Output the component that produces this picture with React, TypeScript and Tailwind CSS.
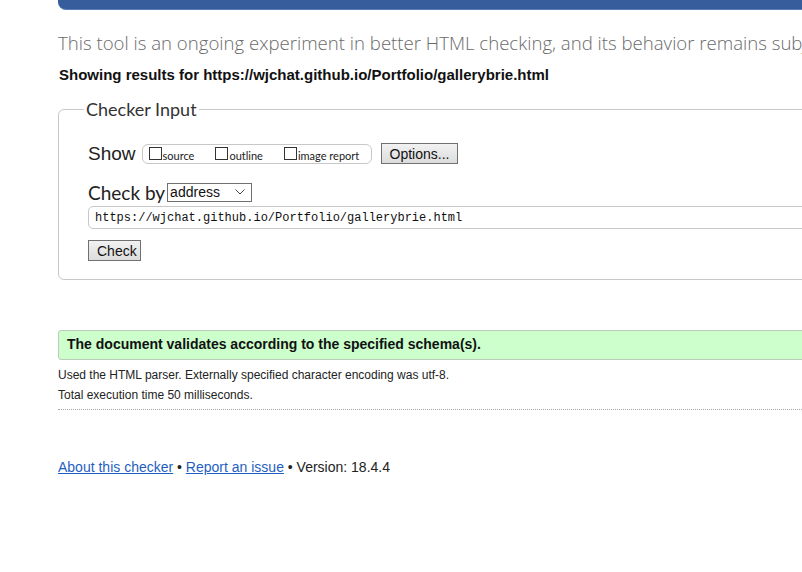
import React from "react";

const segoe = "font-['Lato','Open_Sans',sans-serif]";
const arial = "font-['Liberation_Sans',Arial,sans-serif]";

function Checkbox({ label }: { label: string }) {
  return (
    <label className="flex items-center gap-[1px] mr-[21px] last:mr-0">
      <span className="w-[13px] h-[13px] border border-[#333] bg-white" />
      <span className={`${segoe} text-[11px] text-[#222] leading-none mt-[3px]`}>{label}</span>
    </label>
  );
}

function GrayButton({ children, className = "" }: { children: React.ReactNode; className?: string }) {
  return (
    <button
      className={`${arial} border border-[#707070] bg-gradient-to-b from-[#f2f2f2] to-[#dcdcdc] text-[#111] text-[14px] leading-none px-[8px] ${className}`}
    >
      {children}
    </button>
  );
}

export default function App() {
  return (
    <div className="w-[802px] h-[572px] overflow-hidden bg-white">
      <div className="pl-[58px] w-[1000px]">
        <div className="h-[10px] bg-[#375d9c] rounded-bl-[8px] border-b border-[#5b7db5]" />

        <p className="font-['Open_Sans',sans-serif] mt-[22px] text-[18.6px] font-light text-[#6a6a6a] whitespace-nowrap leading-[22px]">
          This tool is an ongoing experiment in better HTML checking, and its behavior remains subject to change
        </p>
        <p className={`${arial} mt-[12px] ml-[1px] text-[15px] font-bold text-[#111] leading-[18px]`}>
          Showing results for https://wjchat.github.io/Portfolio/gallerybrie.html
        </p>

        <fieldset className="mt-[14px] border border-[#c8c8c8] rounded-[6px] pl-[29px] pr-4 pb-[17px] pt-0 w-[900px]">
          <legend className={`${segoe} text-[18px] text-[#333] px-[2px] ml-[-4px] leading-[22px]`}>
            Checker Input
          </legend>

          <div className="flex items-center mt-[23px]">
            <span className={`${arial} text-[19px] text-[#222] mr-[6px] leading-none`}>Show</span>
            <div className="flex items-center h-[20px] w-[230px] border border-[#c8c8c8] rounded-[6px] pl-[6px] mr-[9px]">
              <Checkbox label="source" />
              <Checkbox label="outline" />
              <Checkbox label="image report" />
            </div>
            <GrayButton className="h-[21px] w-[77px]">Options...</GrayButton>
          </div>

          <div className="flex items-center mt-[19px]">
            <span className={`${segoe} text-[19px] text-[#222] mr-[2px] leading-none`}>Check by</span>
            <div className={`${arial} relative flex items-center w-[85px] h-[19px] border border-[#707070] bg-white text-[14px] text-[#111] pl-[2px]`}>
              address
              <svg className="absolute right-[6px] top-[5px]" width="10" height="6" viewBox="0 0 10 6" fill="none">
                <path d="M0.5 0.5L5 5L9.5 0.5" stroke="#444" strokeWidth="1" />
              </svg>
            </div>
          </div>

          <div className="mt-[4px] h-[23px] border border-[#c8c8c8] rounded-[5px] flex items-center pl-[6px]">
            <span className="font-['Liberation_Mono',monospace] text-[12px] text-[#111]">
              https://wjchat.github.io/Portfolio/gallerybrie.html
            </span>
          </div>

          <GrayButton className="mt-[11px] h-[21px] w-[53px]">Check</GrayButton>
        </fieldset>

        <div className="mt-[50px] h-[30px] w-[900px] bg-[#ccffcc] border border-[#bbcbbb] rounded-l-[3px] flex items-center pl-[8px]">
          <span className={`${arial} text-[14px] font-bold text-[#111]`}>
            The document validates according to the specified schema(s).
          </span>
        </div>

        <p className={`${arial} mt-[8px] text-[12px] text-[#222] leading-[14px]`}>
          Used the HTML parser. Externally specified character encoding was utf-8.
        </p>
        <p className={`${arial} mt-[6px] text-[12px] text-[#222] leading-[14px]`}>
          Total execution time 50 milliseconds.
        </p>
        <div className="mt-[7px] w-[900px] border-t border-dotted border-[#aaa]" />

        <p className={`${arial} mt-[47px] text-[14px] text-[#222]`}>
          <a href="#" className="text-[#1f5fbf] underline">About this checker</a>
          {" • "}
          <a href="#" className="text-[#1f5fbf] underline">Report an issue</a>
          {" • Version: 18.4.4"}
        </p>
      </div>
    </div>
  );
}
